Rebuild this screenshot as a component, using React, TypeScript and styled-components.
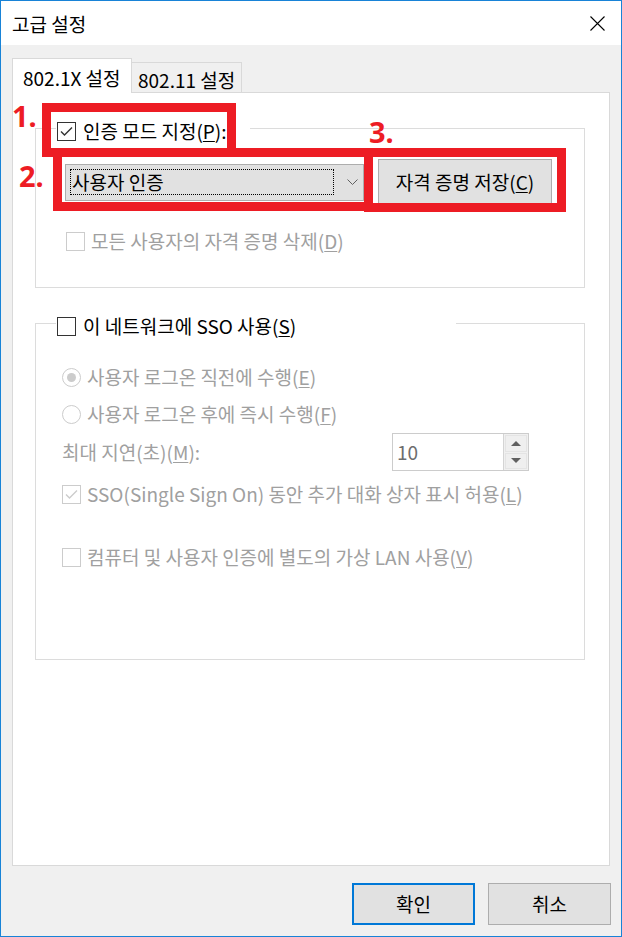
import React from "react";
import styled, { createGlobalStyle } from "styled-components";

const GlobalStyle = createGlobalStyle`
  html, body {
    margin: 0;
    padding: 0;
    background: #fff;
  }
`;

const Window = styled.div`
  position: relative;
  box-sizing: border-box;
  width: 622px;
  height: 937px;
  border: 1px solid #1883d7;
  background: #f0f0f0;
  display: flex;
  flex-direction: column;
  font-family: "Noto Sans CJK KR", "Noto Sans", sans-serif;
  font-size: 19px;
  color: #000;
  overflow: hidden;
`;

const TitleBar = styled.div`
  flex: none;
  box-sizing: border-box;
  height: 44px;
  background: #fff;
  display: flex;
  align-items: center;
  justify-content: space-between;
  padding: 1px 16px 0 11px;
`;

const Title = styled.span`
  line-height: 20px;
`;

const Body = styled.div`
  flex: 1;
  display: flex;
  flex-direction: column;
  padding: 13px 11px 11px;
`;

const TabStrip = styled.div`
  position: relative;
  z-index: 1;
  height: 34px;
  display: flex;
  align-items: flex-end;
`;

const Tab = styled.div<{ $active?: boolean }>`
  box-sizing: border-box;
  border: 1px solid #d9d9d9;
  border-bottom: none;
  line-height: 20px;
  white-space: nowrap;
  ${(p) =>
    p.$active
      ? `
    width: 120px;
    height: 35px;
    margin-bottom: -1px;
    background: #fff;
    padding: 9px 0 0 10px;
  `
      : `
    width: 110px;
    height: 30px;
    border-left: none;
    background: #f0f0f0;
    padding: 7px 0 0 6px;
  `}
`;

const Panel = styled.div`
  box-sizing: border-box;
  height: 774px;
  border: 1px solid #d9d9d9;
  background: #fff;
  display: flex;
  flex-direction: column;
  padding: 0 24px 0 22px;
`;

const GroupBox = styled.div<{ $top: number; $height: number }>`
  box-sizing: border-box;
  margin-top: ${(p) => p.$top}px;
  height: ${(p) => p.$height}px;
  border: 1px solid #dcdcdc;
  display: flex;
  flex-direction: column;
`;

const GroupHeader = styled.div<{ $width: number }>`
  box-sizing: border-box;
  align-self: flex-start;
  width: ${(p) => p.$width}px;
  height: 20px;
  margin: -8px 0 0 20px;
  padding-left: 1px;
  background: #fff;
  display: flex;
  align-items: center;
`;

const OptionRow = styled.div<{ $top: number; $left: number }>`
  display: flex;
  align-items: center;
  height: 20px;
  margin: ${(p) => p.$top}px 0 0 ${(p) => p.$left}px;
`;

const CheckBox = styled.span<{ $disabled?: boolean }>`
  box-sizing: border-box;
  flex: none;
  width: 19px;
  height: 19px;
  border: 1px solid ${(p) => (p.$disabled ? "#cccccc" : "#333333")};
  background: #fff;
  display: flex;
  align-items: center;
  justify-content: center;
`;

const Radio = styled.span`
  box-sizing: border-box;
  flex: none;
  width: 19px;
  height: 19px;
  border: 1px solid #cccccc;
  border-radius: 50%;
  background: #fff;
  display: flex;
  align-items: center;
  justify-content: center;
`;

const RadioDot = styled.span`
  width: 9px;
  height: 9px;
  border-radius: 50%;
  background: #cccccc;
`;

const Label = styled.span<{ $disabled?: boolean; $gap?: number }>`
  margin-left: ${(p) => p.$gap ?? 6}px;
  line-height: 20px;
  white-space: nowrap;
  color: ${(p) => (p.$disabled ? "#a0a0a0" : "#000")};

  u {
    text-underline-offset: 2px;
  }
`;

const ControlRow = styled.div`
  display: flex;
  align-items: center;
  gap: 14px;
  margin: 18px 0 0 29px;
`;

const ComboBox = styled.div`
  box-sizing: border-box;
  width: 299px;
  height: 37px;
  border: 1px solid #adadad;
  background: #e1e1e1;
  display: flex;
  align-items: center;
  padding: 0 5px 0 4px;
`;

const FocusRect = styled.div`
  box-sizing: border-box;
  width: 264px;
  height: 26px;
  border: 1px dotted #000;
  padding-left: 1px;
  display: flex;
  align-items: center;
  line-height: 20px;
`;

const Chevron = styled.svg`
  margin-left: auto;
  flex: none;
`;

const PushButton = styled.button<{ $width: number; $height: number; $default?: boolean }>`
  box-sizing: border-box;
  width: ${(p) => p.$width}px;
  height: ${(p) => p.$height}px;
  padding: 0;
  border: ${(p) => (p.$default ? "2px solid #0078d7" : "1px solid #adadad")};
  background: #e1e1e1;
  font: inherit;
  color: #000;
  line-height: 20px;
  display: flex;
  align-items: center;
  justify-content: center;

  u {
    text-underline-offset: 2px;
  }
`;

const DelayRow = styled.div`
  display: flex;
  align-items: center;
  height: 38px;
  margin: 9px 0 0 26px;
`;

const DelayLabel = styled.span`
  flex: 0 0 330px;
  line-height: 20px;
  color: #a0a0a0;

  u {
    text-underline-offset: 2px;
  }
`;

const SpinBox = styled.div`
  box-sizing: border-box;
  width: 137px;
  height: 38px;
  border: 1px solid #cccccc;
  background: #fff;
  display: flex;
`;

const SpinValue = styled.span`
  flex: 1;
  padding-left: 4px;
  line-height: 36px;
  color: #6d6d6d;
`;

const SpinColumn = styled.div`
  box-sizing: border-box;
  width: 25px;
  border-left: 1px solid #d4d4d4;
  background: #f0f0f0;
  display: flex;
  flex-direction: column;
  padding: 1px;
  gap: 1px;
`;

const SpinButton = styled.div`
  box-sizing: border-box;
  flex: 1;
  border: 1px solid #e4e4e4;
  background: #efefef;
  display: flex;
  align-items: center;
  justify-content: center;
`;

const Arrow = styled.span<{ $down?: boolean }>`
  width: 0;
  height: 0;
  border-left: 5px solid transparent;
  border-right: 5px solid transparent;
  ${(p) => (p.$down ? "border-top" : "border-bottom")}: 5px solid #606060;
`;

const Footer = styled.div`
  display: flex;
  justify-content: flex-end;
  gap: 13px;
  margin: 17px -1px 0 0;
`;

const Marker = styled.div<{ $x: number; $y: number; $w: number; $h: number }>`
  position: absolute;
  box-sizing: border-box;
  left: ${(p) => p.$x - 1}px;
  top: ${(p) => p.$y - 1}px;
  width: ${(p) => p.$w}px;
  height: ${(p) => p.$h}px;
  border: 9px solid #ed1c24;
  pointer-events: none;
`;

const StepNumber = styled.span<{ $x: number; $y: number }>`
  position: absolute;
  left: ${(p) => p.$x - 1}px;
  top: ${(p) => p.$y - 1}px;
  font-family: "Noto Sans", "Liberation Sans", sans-serif;
  font-weight: 700;
  font-size: 29px;
  line-height: 29px;
  color: #ed1c24;
  white-space: nowrap;
`;

function CheckMark({ color }: { color: string }) {
  return (
    <svg width="17" height="17" viewBox="0 0 17 17">
      <polyline points="3,8.5 6.5,12 14,4.5" fill="none" stroke={color} strokeWidth="1.4" />
    </svg>
  );
}

function Check({ checked, disabled }: { checked?: boolean; disabled?: boolean }) {
  return (
    <CheckBox $disabled={disabled}>
      {checked ? <CheckMark color={disabled ? "#cccccc" : "#333333"} /> : null}
    </CheckBox>
  );
}

export default function App() {
  return (
    <>
      <GlobalStyle />
      <Window>
        <TitleBar>
          <Title>고급 설정</Title>
          <svg width="15" height="15" viewBox="0 0 15 15">
            <path d="M0.5 0.5 L14.5 14.5 M14.5 0.5 L0.5 14.5" stroke="#000" strokeWidth="1.1" />
          </svg>
        </TitleBar>

        <Body>
          <TabStrip>
            <Tab $active>802.1X 설정</Tab>
            <Tab>802.11 설정</Tab>
          </TabStrip>

          <Panel>
            <GroupBox $top={35} $height={160}>
              <GroupHeader $width={194}>
                <Check checked />
                <Label $gap={7}>
                  인증 모드 지정(<u>P</u>):
                </Label>
              </GroupHeader>
              <ControlRow>
                <ComboBox>
                  <FocusRect>사용자 인증</FocusRect>
                  <Chevron width="11" height="6" viewBox="0 0 11 6">
                    <polyline points="0.5,0.5 5.5,5.5 10.5,0.5" fill="none" stroke="#606060" strokeWidth="1" />
                  </Chevron>
                </ComboBox>
                <PushButton $width={174} $height={46}>
                  자격 증명 저장(<u>C</u>)
                </PushButton>
              </ControlRow>
              <OptionRow $top={26} $left={30}>
                <Check disabled />
                <Label $disabled>
                  모든 사용자의 자격 증명 삭제(<u>D</u>)
                </Label>
              </OptionRow>
            </GroupBox>

            <GroupBox $top={35} $height={337}>
              <GroupHeader $width={400}>
                <Check />
                <Label $gap={7}>
                  이 네트워크에 SSO 사용(<u>S</u>)
                </Label>
              </GroupHeader>
              <OptionRow $top={31} $left={26}>
                <Radio>
                  <RadioDot />
                </Radio>
                <Label $disabled>
                  사용자 로그온 직전에 수행(<u>E</u>)
                </Label>
              </OptionRow>
              <OptionRow $top={17} $left={26}>
                <Radio />
                <Label $disabled>
                  사용자 로그온 후에 즉시 수행(<u>F</u>)
                </Label>
              </OptionRow>
              <DelayRow>
                <DelayLabel>
                  최대 지연(초)(<u>M</u>):
                </DelayLabel>
                <SpinBox>
                  <SpinValue>10</SpinValue>
                  <SpinColumn>
                    <SpinButton>
                      <Arrow />
                    </SpinButton>
                    <SpinButton>
                      <Arrow $down />
                    </SpinButton>
                  </SpinColumn>
                </SpinBox>
              </DelayRow>
              <OptionRow $top={13} $left={26}>
                <Check checked disabled />
                <Label $disabled>
                  SSO(Single Sign On) 동안 추가 대화 상자 표시 허용(<u>L</u>)
                </Label>
              </OptionRow>
              <OptionRow $top={43} $left={26}>
                <Check disabled />
                <Label $disabled>
                  컴퓨터 및 사용자 인증에 별도의 가상 LAN 사용(<u>V</u>)
                </Label>
              </OptionRow>
            </GroupBox>
          </Panel>

          <Footer>
            <PushButton $width={123} $height={42} $default>
              확인
            </PushButton>
            <PushButton $width={123} $height={42}>
              취소
            </PushButton>
          </Footer>
        </Body>

        <Marker $x={42} $y={103} $w={194} $h={54} />
        <Marker $x={53} $y={148} $w={320} $h={63} />
        <Marker $x={364} $y={148} $w={202} $h={64} />
        <StepNumber $x={12} $y={101}>1.</StepNumber>
        <StepNumber $x={19} $y={161}>2.</StepNumber>
        <StepNumber $x={369} $y={117}>3.</StepNumber>
      </Window>
    </>
  );
}
